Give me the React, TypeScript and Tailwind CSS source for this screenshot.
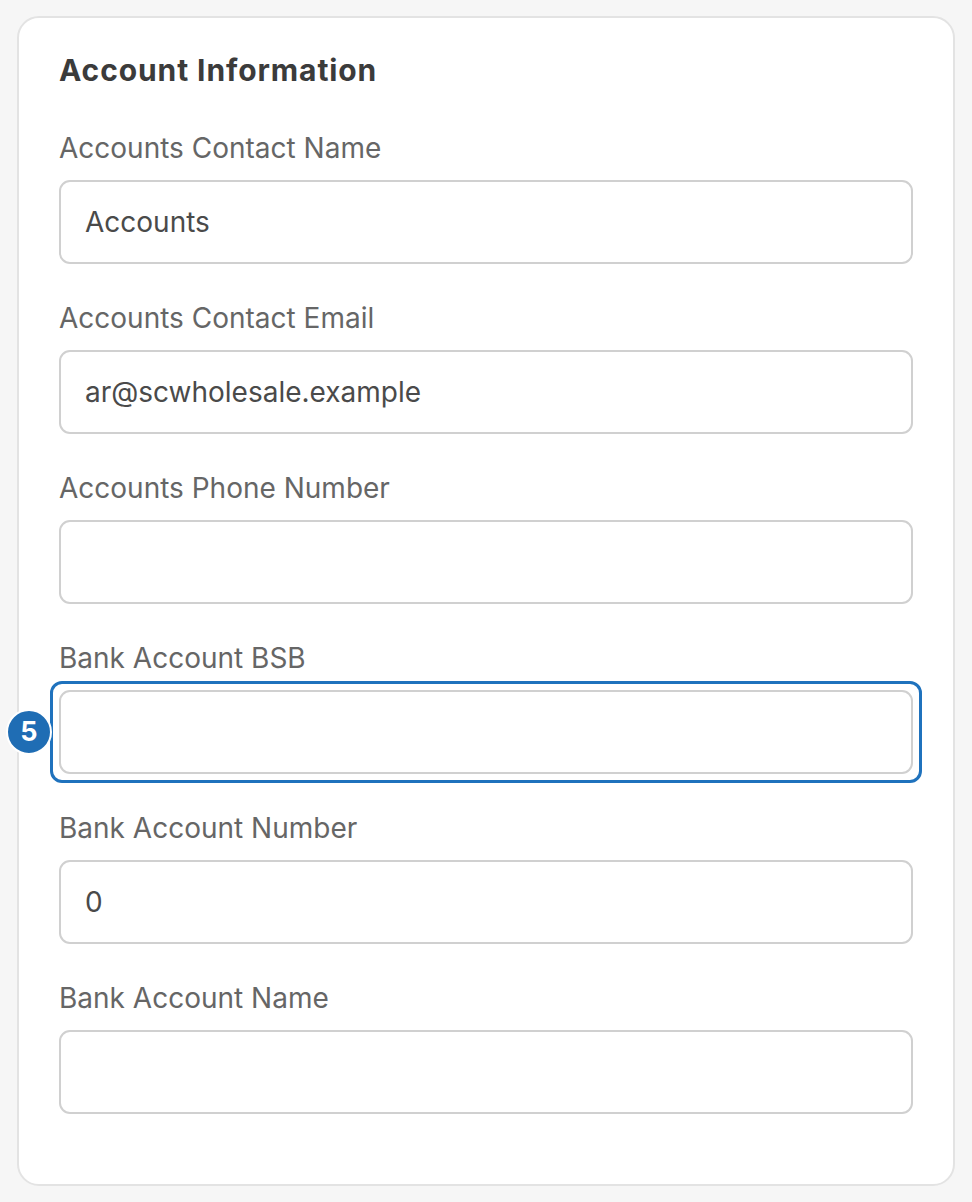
import { ReactNode } from "react";

type Field = {
  label: string;
  value?: string;
  step?: number;
};

const fields: Field[] = [
  { label: "Accounts Contact Name", value: "Accounts" },
  { label: "Accounts Contact Email", value: "ar@scwholesale.example" },
  { label: "Accounts Phone Number" },
  { label: "Bank Account BSB", step: 5 },
  { label: "Bank Account Number", value: "0" },
  { label: "Bank Account Name" },
];

// Marks the current walkthrough step around a field
function StepRing({ step, children }: { step: number; children: ReactNode }) {
  return (
    <div className="relative">
      <div className="pointer-events-none absolute -inset-[9px] rounded-[12px] border-[3px] border-[#1f72bd]" />
      <div className="absolute left-[-53px] top-1/2 flex h-[46px] w-[46px] -translate-y-1/2 items-center justify-center rounded-full border-[2px] border-white bg-[#1f6db4] text-[27px] font-bold text-white">
        {step}
      </div>
      {children}
    </div>
  );
}

function FieldRow({ field }: { field: Field }) {
  const input = (
    <input
      readOnly
      value={field.value ?? ""}
      className="block h-[84px] w-full rounded-[11px] border-2 border-[#d0d0d0] bg-white px-[24px] text-[28px] text-[#4a4a4a] outline-none"
    />
  );
  return (
    <div className="flex flex-col gap-4">
      <label className="text-[28px] leading-8 text-[#666666]">{field.label}</label>
      {field.step ? <StepRing step={field.step}>{input}</StepRing> : input}
    </div>
  );
}

export default function App() {
  return (
    <div className="min-h-[1202px] bg-[#f6f6f6] px-[17px] pt-4 font-['Inter','Noto_Sans',sans-serif]">
      <div className="h-[1170px] w-[938px] rounded-[22px] border-2 border-[#e3e3e3] bg-white px-10 pt-[34px]">
        <h2 className="text-[30px] font-bold leading-9 tracking-[0.03em] text-[#3b3b3b]">Account Information</h2>
        <div className="mt-[44px] flex flex-col gap-[38px]">
          {fields.map((f) => (
            <FieldRow key={f.label} field={f} />
          ))}
        </div>
      </div>
    </div>
  );
}
